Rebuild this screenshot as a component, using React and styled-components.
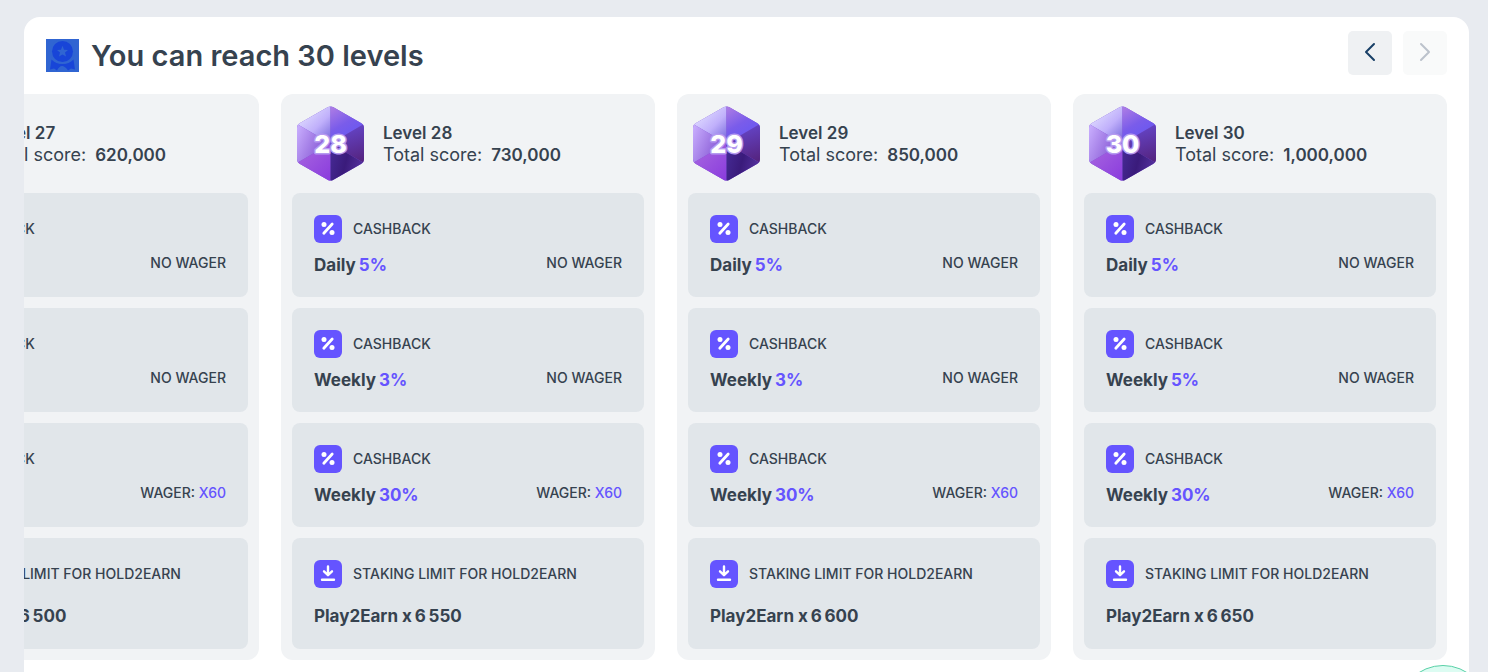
import React from 'react';
import styled, { createGlobalStyle } from 'styled-components';

const GlobalStyle = createGlobalStyle`
  * {
    box-sizing: border-box;
  }

  body {
    margin: 0;
    background-color: #e8ebf0;
    color: #36424f;
    font-family: Inter, "Liberation Sans", sans-serif;
    font-size: 16px;
  }
`;

const Page = styled.main`
  height: 100vh;
  padding: 17px 19px 0 24px;
  overflow: hidden;
`;

const Panel = styled.section`
  min-height: 100%;
  background-color: #ffffff;
  border-radius: 16px 16px 0 0;
  overflow: hidden;
`;

const PanelHeader = styled.header`
  display: flex;
  align-items: center;
  justify-content: space-between;
  padding: 14px 22px 19px;
`;

const Heading = styled.div`
  display: flex;
  align-items: center;
  gap: 12px;
  padding-top: 5px;
`;

const Title = styled.h2`
  margin: 0;
  font-size: 29px;
  line-height: 35px;
  font-weight: 600;
`;

const Arrows = styled.div`
  display: flex;
  gap: 11px;
`;

const ArrowButton = styled.button`
  display: flex;
  width: 44px;
  height: 44px;
  padding: 0;
  border: none;
  border-radius: 5px;
  background-color: #eff1f3;
  color: #183f66;
  cursor: pointer;

  &:disabled {
    background-color: #f9fafa;
    color: #bcc2cb;
    cursor: default;
  }
`;

const Track = styled.div`
  display: flex;
  justify-content: flex-end;
  gap: 22px;
  padding-right: 22px;
`;

const Card = styled.article`
  flex: 0 0 374px;
  padding-bottom: 11px;
  background-color: #f1f3f5;
  border-radius: 12px;
`;

const CardHeader = styled.div`
  display: flex;
  align-items: center;
  gap: 19px;
  padding: 12px 16px;
`;

const LevelName = styled.h3`
  margin: 0;
  font-size: 17px;
  line-height: 22px;
  font-weight: 600;
`;

const Score = styled.p`
  display: flex;
  align-items: baseline;
  gap: 9px;
  margin: 0;
  font-size: 18px;
  line-height: 22px;

  strong {
    font-size: 17px;
    font-weight: 600;
  }
`;

const Rewards = styled.div`
  display: flex;
  flex-direction: column;
  gap: 11px;
  padding: 0 11px;
`;

const Reward = styled.div`
  display: flex;
  flex-direction: column;
  gap: ${props => (props.$spacious ? '17px' : '11px')};
  padding: 22px;
  padding-bottom: ${props => (props.$spacious ? '22px' : '21px')};
  background-color: #e1e6ea;
  border-radius: 8px;
`;

const RewardType = styled.div`
  display: flex;
  align-items: center;
  gap: 11px;
  font-size: 14px;
  line-height: 28px;
  font-weight: 500;
  text-transform: uppercase;
`;

const RewardIcon = styled.svg`
  flex: none;
  width: 28px;
  height: 28px;
  background-color: #6554ff;
  border-radius: 6px;
`;

const RewardRow = styled.div`
  display: flex;
  align-items: flex-start;
  justify-content: space-between;
`;

const RewardValue = styled.div`
  display: flex;
  gap: 3px;
  font-size: 17px;
  line-height: 22px;
  font-weight: 700;
`;

const Wager = styled.div`
  font-size: 14px;
  line-height: 18px;
  font-weight: 500;
  text-transform: uppercase;
`;

const Accent = styled.span`
  color: #6554ff;
`;

const ChatButton = styled.button`
  position: fixed;
  right: 0;
  bottom: -83px;
  width: 90px;
  height: 90px;
  padding: 0;
  border: 1px solid #58d0a6;
  border-radius: 50%;
  background-color: #dcfcf2;
  cursor: pointer;
`;

const BadgeNumber = styled.text`
  font-family: Inter, "Liberation Sans", sans-serif;
  font-size: 25px;
  font-weight: 800;
  text-anchor: middle;
  fill: #ffffff;
  stroke: #b59af0;
  stroke-width: 3px;
  stroke-linejoin: round;
  paint-order: stroke;
`;

const levels = [
  { level: 27, score: '620,000', weekly: '3%', limit: '6\u2009500' },
  { level: 28, score: '730,000', weekly: '3%', limit: '6\u2009550' },
  { level: 29, score: '850,000', weekly: '3%', limit: '6\u2009600' },
  { level: 30, score: '1,000,000', weekly: '5%', limit: '6\u2009650' },
];

function MedalIcon() {
  return (
    <svg width="33" height="33" viewBox="0 0 33 33" aria-hidden="true">
      <rect width="33" height="33" fill="#3065d2" />
      <path d="M5.500 20.500Q10 25 16.500 25T27.500 20.500L29 30.500L25 29.600L22 31.500Q19.500 27.500 16.500 27T11 31.500L8 29.600L4 30.500Z" fill="#1845d8" />
      <circle cx="16.500" cy="12.500" r="12.200" fill="#3065d2" />
      <circle cx="16.500" cy="12.500" r="10.500" fill="#1845d8" />
      <path d="M16.500 6.800L18 10.700L22 11L19 13.600L20 17.600L16.500 15.400L13 17.600L14 13.600L11 11L15 10.700Z" fill="#3065d2" />
    </svg>
  );
}

function LevelBadge({ level }) {
  const id = `badge-${level}`;
  return (
    <svg width="67" height="75" viewBox="0 0 67 75" role="img" aria-label={`Level ${level} badge`}>
      <defs>
        <clipPath id={`${id}-shape`}>
          <path d="M30.500 1.300Q33.500 -0.500 36.500 1.300L64 17Q67 18.700 67 22V53Q67 56.300 64 58L36.500 73.700Q33.500 75.500 30.500 73.700L3 58Q0 56.300 0 53V22Q0 18.700 3 17Z" />
        </clipPath>
        <linearGradient id={`${id}-tl`} x1="0.2" y1="0.2" x2="0.9" y2="1">
          <stop offset="0" stopColor="#ded9ff" />
          <stop offset="0.5" stopColor="#c0b0fb" />
          <stop offset="1" stopColor="#7869dc" />
        </linearGradient>
        <linearGradient id={`${id}-tr`} x1="0.2" y1="0" x2="0.7" y2="0.9">
          <stop offset="0" stopColor="#a879e5" />
          <stop offset="0.5" stopColor="#7a5cea" />
          <stop offset="1" stopColor="#6657f3" />
        </linearGradient>
        <linearGradient id={`${id}-l`} x1="0" y1="0" x2="1" y2="0.5">
          <stop offset="0" stopColor="#cbb1ff" />
          <stop offset="1" stopColor="#8050d0" />
        </linearGradient>
        <linearGradient id={`${id}-r`} x1="0.4" y1="0" x2="0.7" y2="1">
          <stop offset="0" stopColor="#6648cf" />
          <stop offset="1" stopColor="#552480" />
        </linearGradient>
        <linearGradient id={`${id}-bl`} x1="0" y1="0" x2="0.9" y2="1">
          <stop offset="0" stopColor="#aa6ae0" />
          <stop offset="1" stopColor="#8b3ddd" />
        </linearGradient>
        <linearGradient id={`${id}-br`} x1="0" y1="0.2" x2="1" y2="0.5">
          <stop offset="0" stopColor="#452a94" />
          <stop offset="0.5" stopColor="#3a1b7b" />
          <stop offset="1" stopColor="#55319e" />
        </linearGradient>
      </defs>
      <g clipPath={`url(#${id}-shape)`}>
        <rect width="67" height="75" fill="#7950d4" />
        <path d="M33.500 0V37.500L0 18V0Z" fill={`url(#${id}-tl)`} />
        <path d="M33.500 0V37.500L67 18V0Z" fill={`url(#${id}-tr)`} />
        <path d="M0 18L33.500 37.500L0 57Z" fill={`url(#${id}-l)`} />
        <path d="M67 18L33.500 37.500L67 57Z" fill={`url(#${id}-r)`} />
        <path d="M0 57L33.500 37.500V75H0Z" fill={`url(#${id}-bl)`} />
        <path d="M67 57L33.500 37.500V75H67Z" fill={`url(#${id}-br)`} />
      </g>
      <BadgeNumber x="33.500" y="47">{level}</BadgeNumber>
    </svg>
  );
}

function PercentIcon() {
  return (
    <RewardIcon viewBox="0 0 28 28" aria-hidden="true">
      <path d="M18.200 9L9.800 18.200" stroke="#ffffff" strokeWidth="2.800" strokeLinecap="round" />
      <circle cx="10" cy="9.500" r="2.500" fill="#ffffff" />
      <circle cx="18" cy="17.500" r="2.500" fill="#ffffff" />
    </RewardIcon>
  );
}

function DownloadIcon() {
  return (
    <RewardIcon viewBox="0 0 28 28" aria-hidden="true">
      <path d="M14 6.500V14.500M10 11.300L14 15.200L18 11.300M8 19.700H20" fill="none" stroke="#ffffff" strokeWidth="2.400" strokeLinecap="round" strokeLinejoin="round" />
    </RewardIcon>
  );
}

function Chevron({ points }) {
  return (
    <svg width="44" height="44" viewBox="0 0 44 44" aria-hidden="true">
      <polyline points={points} fill="none" stroke="currentColor" strokeWidth="2" strokeLinecap="round" strokeLinejoin="round" />
    </svg>
  );
}

function CashbackReward({ period, percent, wager }) {
  return (
    <Reward>
      <RewardType>
        <PercentIcon />
        Cashback
      </RewardType>
      <RewardRow>
        <RewardValue>{period} <Accent>{percent}</Accent></RewardValue>
        {wager ? <Wager>Wager: <Accent>{wager}</Accent></Wager> : <Wager>No wager</Wager>}
      </RewardRow>
    </Reward>
  );
}

function LevelCard({ level, score, weekly, limit }) {
  return (
    <Card>
      <CardHeader>
        <LevelBadge level={level} />
        <div>
          <LevelName>Level {level}</LevelName>
          <Score>Total score: <strong>{score}</strong></Score>
        </div>
      </CardHeader>
      <Rewards>
        <CashbackReward period="Daily" percent="5%" />
        <CashbackReward period="Weekly" percent={weekly} />
        <CashbackReward period="Weekly" percent="30%" wager="x60" />
        <Reward $spacious>
          <RewardType>
            <DownloadIcon />
            Staking limit for Hold2Earn
          </RewardType>
          <RewardValue>
            <span>Play2Earn x</span>
            <span>{limit}</span>
          </RewardValue>
        </Reward>
      </Rewards>
    </Card>
  );
}

function App() {
  return (
    <Page>
      <GlobalStyle />
      <Panel>
        <PanelHeader>
          <Heading>
            <MedalIcon />
            <Title>You can reach 30 levels</Title>
          </Heading>
          <Arrows>
            <ArrowButton type="button" aria-label="Previous levels">
              <Chevron points="26,13 18,21 26,29" />
            </ArrowButton>
            <ArrowButton type="button" aria-label="Next levels" disabled>
              <Chevron points="18,13 26,21 18,29" />
            </ArrowButton>
          </Arrows>
        </PanelHeader>
        <Track>
          {levels.map(item => (
            <LevelCard key={item.level} {...item} />
          ))}
        </Track>
      </Panel>
      <ChatButton type="button" aria-label="Open chat" />
    </Page>
  );
}

export default App;
